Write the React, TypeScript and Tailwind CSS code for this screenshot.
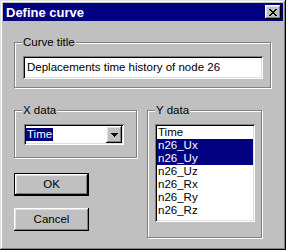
const raised =
  "shadow-[inset_-1px_-1px_#000,inset_1px_1px_#fff,inset_-2px_-2px_#808080,inset_2px_2px_#dfdfdf]"

const GroupBox = ({ label, className, children }: { label: string; className: string; children?: React.ReactNode }) => (
  <div className={"relative border border-[#808080] shadow-[inset_1px_1px_#fff,1px_1px_#fff] " + className}>
    <span className="absolute left-[7px] top-[-8px] bg-[#c0c0c0] px-[1px] leading-[14px] text-black">{label}</span>
    {children}
  </div>
)

const items = ["Time", "n26_Ux", "n26_Uy", "n26_Uz", "n26_Rx", "n26_Ry", "n26_Rz"]

const App = () => {
  return (
    <div className="w-[286px] h-[250px] bg-[#c0c0c0] p-[3px] flex flex-col text-[11.5px] font-['Liberation_Sans',Arial,sans-serif] shadow-[inset_-1px_-1px_#000,inset_1px_1px_#dfdfdf,inset_-2px_-2px_#808080,inset_2px_2px_#fff]">
      {/* title bar */}
      <div className="h-[18px] bg-[#000080] flex items-center justify-between pl-[3px] pr-[2px]">
        <span className="text-white font-bold text-[13px] leading-none">Define curve</span>
        <button className={"w-[16px] h-[14px] bg-[#c0c0c0] flex items-center justify-center " + raised}>
          <svg width="8" height="7" viewBox="0 0 8 7" shapeRendering="crispEdges">
            <path d="M0 0h2v1H0zM6 0h2v1H6zM1 1h2v1H1zM5 1h2v1H5zM2 2h4v1H2zM3 3h2v1H3zM2 4h4v1H2zM1 5h2v1H1zM5 5h2v1H5zM0 6h2v1H0zM6 6h2v1H6z" fill="#000" />
          </svg>
        </button>
      </div>

      <div className="flex flex-col pl-[11px] pt-[21px]">
        <GroupBox label="Curve title" className="w-[257px] h-[46px] pt-[13px] pl-[8px]">
          <div className="w-[240px] h-[23px] bg-white flex items-center pl-[4px] shadow-[inset_1px_1px_#808080,inset_-1px_-1px_#fff,inset_2px_2px_#000,inset_-2px_-2px_#dfdfdf]">
            Deplacements time history of node 26
          </div>
        </GroupBox>

        <div className="flex mt-[22px] gap-[10px]">
          <div className="flex flex-col w-[123px]">
            <GroupBox label="X data" className="h-[48px] pt-[13px] pl-[9px]">
              <div className="w-[100px] h-[21px] bg-white flex items-center pl-[2px] pr-[2px] shadow-[inset_1px_1px_#808080,inset_-1px_-1px_#fff,inset_2px_2px_#000,inset_-2px_-2px_#dfdfdf]">
                <span className="bg-[#000080] text-white px-[1px] leading-[13px]">Time</span>
                <div className={"ml-auto w-[16px] h-[17px] bg-[#c0c0c0] flex items-center justify-center " + raised}>
                  <svg width="7" height="4" viewBox="0 0 7 4" shapeRendering="crispEdges">
                    <path d="M0 0h7v1H0zM1 1h5v1H1zM2 2h3v1H2zM3 3h1v1H3z" fill="#000" />
                  </svg>
                </div>
              </div>
            </GroupBox>
            <button className="mt-[15px] w-[75px] h-[23px] border border-black bg-[#c0c0c0] shadow-[inset_-1px_-1px_#000,inset_1px_1px_#fff,inset_-2px_-2px_#808080,inset_2px_2px_#dfdfdf] text-black">
              OK
            </button>
            <button className={"mt-[12px] w-[75px] h-[23px] bg-[#c0c0c0] text-black " + raised}>Cancel</button>
          </div>

          <GroupBox label="Y data" className="w-[115px] h-[128px] pt-[13px] pl-[7px]">
            <div className="w-[100px] h-[98px] bg-white p-[2px] shadow-[inset_1px_1px_#808080,inset_-1px_-1px_#fff,inset_2px_2px_#000,inset_-2px_-2px_#dfdfdf]">
              {items.map((it, i) => (
                <div
                  key={it}
                  className={
                    "h-[13px] leading-[13px] pl-[1px] " +
                    (i === 1 || i === 2 ? "bg-[#000080] text-white" : "text-black")
                  }
                >
                  {it}
                </div>
              ))}
            </div>
          </GroupBox>
        </div>
      </div>
    </div>
  )
}

export default App
